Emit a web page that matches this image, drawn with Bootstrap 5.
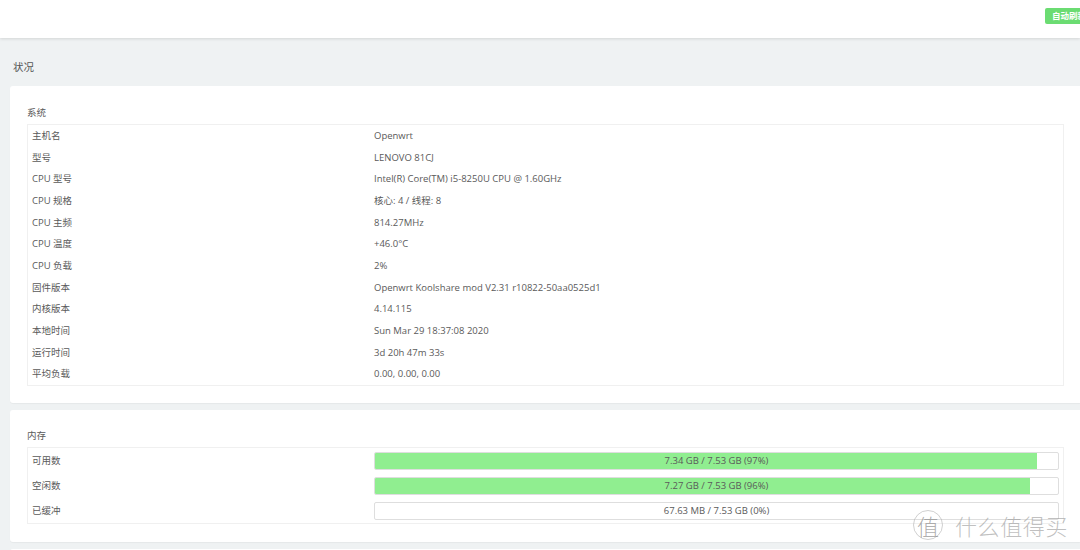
<!DOCTYPE html>
<html lang="zh">
<head>
<meta charset="utf-8">
<title>状况</title>
<link rel="stylesheet" href="https://cdn.jsdelivr.net/npm/bootstrap@5.3.0/dist/css/bootstrap.min.css">
<style>
html,body{height:550px;overflow:hidden}
body{background:#eff2f3;color:#5a5a5a;font-family:"Open Sans","Noto Sans CJK SC",sans-serif;font-size:9.5px;line-height:14px}
.topbar{height:38px;background:#fff;box-shadow:0 1px 3px rgba(0,0,0,.12)}
.refresh-tag{width:35px;height:16px;margin-top:8px;background:#6bdc72;color:#fff;font-size:8.5px;line-height:16px;border-radius:2px 0 0 2px;padding-left:7px;white-space:nowrap;overflow:hidden;font-weight:600}
.page-title{font-size:10.5px;line-height:16px;margin:21px 0 11px 13px;color:#555;height:16px}
.panel-box{background:#fff;margin:0 0 7px 10px;border-radius:3px 0 0 3px;box-shadow:0 1px 1px rgba(0,0,0,.04);padding:20px 16px 18px 17px}
.panel-one{height:317px}
.panel-two{height:132px;padding-top:19px}
.panel-three{height:20px;padding:0}
.panel-label{line-height:14px;margin-bottom:4px;height:14px}
.info-grid{border:1px solid #f0f0f0;width:100%;table-layout:fixed;margin:0;border-collapse:separate;border-spacing:0}
.info-grid td{padding:0 4px;height:21.7px;vertical-align:middle;color:#5a5a5a;background:transparent;border:0}
.info-grid td:first-child{width:342px}
.mem-grid td{height:25px;padding:0 4px}
.mem-bar{position:relative;height:18px;border:1px solid #dedede;border-radius:2px;text-align:center;line-height:16px;background:#fff;overflow:hidden}
.mem-fill{position:absolute;left:-1px;top:-1px;bottom:-1px;background:#90ee90}
.mem-text{position:relative}
.stamp{position:absolute;left:913px;top:510px;height:30px;pointer-events:none}
.stamp-ring{width:30px;height:30px;border:1px solid rgba(170,170,170,.55);border-radius:50%;font-size:22px;line-height:28px;text-align:center;margin-right:12px;font-family:"Noto Sans CJK SC",sans-serif;color:rgba(130,130,130,.65);font-weight:300}
.stamp-word{font-size:22px;line-height:30px;letter-spacing:.6px;font-family:"Noto Sans CJK SC",sans-serif;font-weight:300;color:rgba(150,150,150,.6);white-space:nowrap}
</style>
</head>
<body class="position-relative">
<div class="topbar d-flex justify-content-end">
  <div class="refresh-tag">自动刷新开</div>
</div>
<div class="page-title">状况</div>
<div class="panel-box panel-one">
  <div class="panel-label">系统</div>
  <table class="table table-borderless info-grid">
    <tbody>
      <tr><td>主机名</td><td>Openwrt</td></tr>
      <tr><td>型号</td><td>LENOVO 81CJ</td></tr>
      <tr><td>CPU 型号</td><td>Intel(R) Core(TM) i5-8250U CPU @ 1.60GHz</td></tr>
      <tr><td>CPU 规格</td><td>核心: 4 / 线程: 8</td></tr>
      <tr><td>CPU 主频</td><td>814.27MHz</td></tr>
      <tr><td>CPU 温度</td><td>+46.0°C</td></tr>
      <tr><td>CPU 负载</td><td>2%</td></tr>
      <tr><td>固件版本</td><td>Openwrt Koolshare mod V2.31 r10822-50aa0525d1</td></tr>
      <tr><td>内核版本</td><td>4.14.115</td></tr>
      <tr><td>本地时间</td><td>Sun Mar 29 18:37:08 2020</td></tr>
      <tr><td>运行时间</td><td>3d 20h 47m 33s</td></tr>
      <tr><td>平均负载</td><td>0.00, 0.00, 0.00</td></tr>
    </tbody>
  </table>
</div>
<div class="panel-box panel-two">
  <div class="panel-label">内存</div>
  <table class="table table-borderless info-grid mem-grid">
    <tbody>
      <tr><td>可用数</td><td><div class="mem-bar"><div class="mem-fill" style="width:97%"></div><span class="mem-text">7.34 GB / 7.53 GB (97%)</span></div></td></tr>
      <tr><td>空闲数</td><td><div class="mem-bar"><div class="mem-fill" style="width:96%"></div><span class="mem-text">7.27 GB / 7.53 GB (96%)</span></div></td></tr>
      <tr><td>已缓冲</td><td><div class="mem-bar"><span class="mem-text">67.63 MB / 7.53 GB (0%)</span></div></td></tr>
    </tbody>
  </table>
</div>
<div class="panel-box panel-three"></div>
<div class="stamp d-flex align-items-center">
  <div class="stamp-ring">值</div>
  <div class="stamp-word">什么值得买</div>
</div>
</body>
</html>
